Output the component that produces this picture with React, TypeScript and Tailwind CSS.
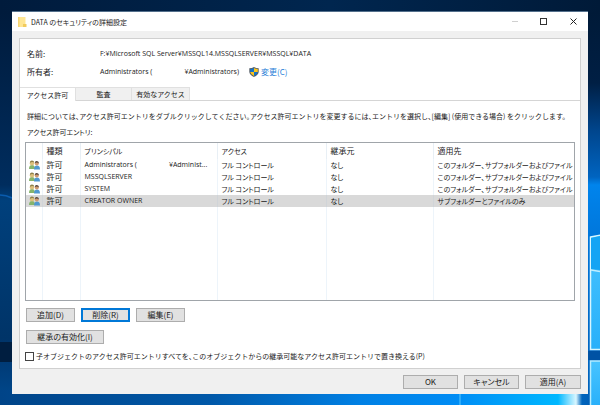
import React, { useState } from "react";

const entries = [
  {
    principal: (
      <>
        Administrators (<span className="inline-block w-8" />
        ¥Administ...
      </>
    ),
    target: "このフォルダー、サブフォルダーおよびファイル",
  },
  { principal: "MSSQLSERVER", target: "このフォルダー、サブフォルダーおよびファイル" },
  { principal: "SYSTEM", target: "このフォルダー、サブフォルダーおよびファイル" },
  { principal: "CREATOR OWNER", target: "サブフォルダーとファイルのみ" },
];

const latin = "font-['Open_Sans','Noto_Sans_CJK_JP',sans-serif] text-[7px]";

const Desktop = () => (
  <svg
    className="absolute inset-0 h-full w-full"
    viewBox="0 0 600 405"
    preserveAspectRatio="none"
    aria-hidden="true"
  >
    <defs>
      <linearGradient id="top" x1="0" x2="1" y1="0" y2="0">
        <stop offset="0" stopColor="#001b3c" />
        <stop offset="0.55" stopColor="#00264f" />
        <stop offset="1" stopColor="#001a38" />
      </linearGradient>
      <linearGradient id="left" x1="0" x2="0" y1="0" y2="1">
        <stop offset="0" stopColor="#001b3c" />
        <stop offset="0.44" stopColor="#002d5e" />
        <stop offset="0.48" stopColor="#00407c" />
        <stop offset="0.83" stopColor="#003468" />
        <stop offset="0.9" stopColor="#003c78" />
        <stop offset="1" stopColor="#004a90" />
      </linearGradient>
      <linearGradient id="right" x1="0" x2="0" y1="0" y2="1">
        <stop offset="0" stopColor="#001a38" />
        <stop offset="0.18" stopColor="#001f44" />
        <stop offset="0.3" stopColor="#00458c" />
        <stop offset="0.42" stopColor="#0064c0" />
        <stop offset="0.44" stopColor="#0084ec" />
        <stop offset="0.6" stopColor="#0074d8" />
        <stop offset="1" stopColor="#0060b8" />
      </linearGradient>
      <linearGradient id="bottom" x1="0" x2="1" y1="0" y2="0">
        <stop offset="0" stopColor="#004488" />
        <stop offset="0.35" stopColor="#0058a8" />
        <stop offset="0.6" stopColor="#0080e4" />
        <stop offset="0.76" stopColor="#008cf4" />
        <stop offset="0.93" stopColor="#00b8ff" />
        <stop offset="0.96" stopColor="#d8f6ff" />
        <stop offset="0.97" stopColor="#0064bc" />
        <stop offset="1" stopColor="#0058b0" />
      </linearGradient>
      <linearGradient id="pane" x1="0" x2="0" y1="0" y2="1">
        <stop offset="0" stopColor="#48c4ff" />
        <stop offset="1" stopColor="#28b0fa" />
      </linearGradient>
    </defs>
    <rect width="600" height="405" fill="url(#top)" />
    <rect y="12" width="20" height="393" fill="url(#left)" />
    <path d="M0 195Q6 195 12 198" fill="none" stroke="#0a5cae" strokeWidth="1.5" />
    <rect y="342" width="12" height="20" fill="#001e40" />
    <rect x="580" y="12" width="20" height="393" fill="url(#right)" />
    <rect y="390" width="600" height="15" fill="url(#bottom)" />
    <path d="M460 390V405" stroke="#58c8ff" strokeWidth="1" />
    <path d="M590.500 237 601 235V349.500H590.500Z" fill="url(#pane)" stroke="#d8f6ff" strokeWidth="1.5" />
    <path d="M591 238 600 236V270L591 269Z" fill="#14a4f4" />
    <path d="M591 270 600 271.500" stroke="#c0eeff" strokeWidth="1.5" />
    <rect x="588" y="351" width="12" height="9" fill="#0052a4" />
    <path d="M590.500 361H601V406H590.500Z" fill="url(#pane)" stroke="#b4ecff" strokeWidth="1.5" />
  </svg>
);

const Folder = () => (
  <svg className="h-3 w-3" viewBox="0 0 12 12" aria-hidden="true">
    <path d="M2 1H9.500V11H2Z" fill="#ffe694" />
    <path d="M2 1H3.500V11H2Z" fill="#f7d675" />
    <path d="M7 8H10.500V11H7Z" fill="#f2cb5c" />
  </svg>
);

const Shield = () => (
  <svg className="h-2.5 w-2.5" viewBox="0 0 10 10" aria-hidden="true">
    <path d="M5 0Q3 1.200.3 1.200V5Q.7 8 5 10Q9.300 8 9.700 5V1.200Q7 1.200 5 0Z" fill="#555d66" />
    <path d="M5 1Q3.300 1.900 1.200 2V5H5Z" fill="#1673c9" />
    <path d="M5 1Q6.700 1.900 8.800 2V5H5Z" fill="#fbc51e" />
    <path d="M1.200 5H5V9Q1.700 7.500 1.200 5Z" fill="#fbc51e" />
    <path d="M8.800 5H5V9Q8.300 7.500 8.800 5Z" fill="#1673c9" />
  </svg>
);

const Users = () => (
  <svg className="h-2.5 w-[11px]" viewBox="0 0 11 10" aria-hidden="true">
    <path d="M0 9Q0 5 3 5T6 9Z" fill="#86b46c" />
    <path d="M5 9.500Q5 5.500 8 5.500T11 9.500Z" fill="#4f98d0" />
    <circle cx="3" cy="3.200" r="2.200" fill="#dcc07c" />
    <path d="M.8 3Q1 .5 3 .6T5.200 2.500Q3 1.500.8 3" fill="#8f8048" />
    <circle cx="7.800" cy="3.500" r="2" fill="#cf9a70" />
    <path d="M5.700 3Q5.800.8 7.900.9T9.900 3.500Q8.500 2 5.700 3" fill="#54453c" />
  </svg>
);

const PushButton = ({
  children,
  className,
}: {
  children: React.ReactNode;
  className: string;
}) => (
  <button
    className={`flex h-[14px] items-center justify-center bg-[#e1e1e1] ${className}`}
  >
    {children}
  </button>
);

const App = () => {
  const [tab, setTab] = useState(0);
  const [selected, setSelected] = useState(3);
  const tabs = ["アクセス許可", "監査", "有効なアクセス"];

  return (
    <div className="relative min-h-screen overflow-hidden bg-[#001b3c] px-3 pt-[11px] pb-[11px] font-['Noto_Sans_CJK_JP',sans-serif] text-[8px] leading-3 text-[#1a1a1a] [font-feature-settings:'palt']">
      <Desktop />
      <div className="relative border-t border-[#54708c] bg-[#f0f0f0]">
        <header className="flex h-[19px] items-center bg-white pl-1">
          <Folder />
          <h1 className="ml-[3px] flex-1 text-[7px]">DATA のセキュリティの詳細設定</h1>
          <button aria-label="最小化" className="flex h-full w-[29px] items-center justify-center">
            <span className="h-px w-1.5 bg-[#d0d0d0]" />
          </button>
          <button aria-label="最大化" className="flex h-full w-[29px] items-center justify-center">
            <span className="size-[7px] border border-[#333]" />
          </button>
          <button aria-label="閉じる" className="flex h-full w-[30px] items-center justify-center">
            <svg className="size-[7px]" viewBox="0 0 7 7" aria-hidden="true">
              <path d="M.5.5 6.500 6.500M6.500.5.5 6.500" stroke="#222" />
            </svg>
          </button>
        </header>

        <main className="mx-[7px] mt-[7px] border border-[#d0d0d0] bg-white pb-[6px]">
          <dl className="grid grid-cols-[73px_1fr] gap-y-1.5 pt-[9px] pl-[7px]">
            <dt>名前:</dt>
            <dd className={latin}>F:¥Microsoft SQL Server¥MSSQL14.MSSQLSERVER¥MSSQL¥DATA</dd>
            <dt>所有者:</dt>
            <dd className="flex items-center">
              <span className={latin}>
                Administrators (<span className="inline-block w-8" />
                ¥Administrators)
              </span>
              <a href="#change" className="ml-2.5 flex items-center gap-0.5 text-[#2a7fd8]">
                <Shield />
                変更(C)
              </a>
            </dd>
          </dl>

          <div role="tablist" className="mt-[9px] flex h-[14px] border-b border-[#d5d5d5] text-[7px] [font-feature-settings:'halt']">
            {tabs.map((name, i) => (
              <button
                key={name}
                role="tab"
                aria-selected={tab === i}
                onClick={() => setTab(i)}
                className={
                  tab === i
                    ? "-mb-px w-14 border-t border-r border-[#e0e0e0] bg-white"
                    : "w-14 border-t border-r border-[#e0e0e0] bg-[#f0f0f0] last:w-[58px]"
                }
              >
                {name}
              </button>
            ))}
          </div>

          <section className="px-[5px] pt-[9px]">
            <p className="pl-0.5 text-[7px] whitespace-nowrap [font-feature-settings:'halt']">
              詳細については、アクセス許可エントリをダブルクリックしてください。アクセス許可エントリを変更するには、エントリを選択し、[編集] (使用できる場合) をクリックします。
            </p>
            <p className="mt-1 pl-0.5 text-[7px]">アクセス許可エントリ:</p>

            <div className="mt-1 flex h-[159px] flex-col border border-[#a0a5aa]">
              <table className="h-full w-full table-fixed text-left">
                <colgroup>
                  <col className="w-4" />
                  <col className="w-[38px]" />
                  <col className="w-[137px]" />
                  <col className="w-[109px]" />
                  <col className="w-[107px]" />
                  <col />
                </colgroup>
                <thead>
                  <tr className="h-4 *:border-r *:border-[#e8eff5] *:p-0 *:pl-1 *:font-normal *:last:border-r-0">
                    <th />
                    <th>種類</th>
                    <th className="text-[7px]">プリンシパル</th>
                    <th className="text-[7px]">アクセス</th>
                    <th>継承元</th>
                    <th>適用先</th>
                  </tr>
                </thead>
                <tbody>
                  {entries.map((entry, i) => (
                    <tr
                      key={i}
                      onClick={() => setSelected(i)}
                      className={`h-3 *:border-r *:p-0 *:pl-1 *:whitespace-nowrap *:last:border-r-0 ${
                        selected === i ? "bg-[#d9d9d9] *:border-[#d0d4d8]" : "*:border-[#edf4fa]"
                      }`}
                    >
                      <td>
                        <div className="-ml-px">
                          <Users />
                        </div>
                      </td>
                      <td>許可</td>
                      <td className={latin}>{entry.principal}</td>
                      <td className="text-[7px]">フル コントロール</td>
                      <td className="text-[7px]">なし</td>
                      <td className="text-[7px]">{entry.target}</td>
                    </tr>
                  ))}
                  <tr className="*:border-r *:border-[#edf4fa] *:last:border-r-0">
                    <td />
                    <td />
                    <td />
                    <td />
                    <td />
                    <td />
                  </tr>
                </tbody>
              </table>
            </div>

            <div className="mt-[7px] flex gap-1.5 pl-px">
              <PushButton className="w-[49px] border border-[#adadad]">追加(D)</PushButton>
              <PushButton className="w-[49px] border-2 border-[#0078d7]">削除(R)</PushButton>
              <PushButton className="w-[49px] border border-[#adadad]">編集(E)</PushButton>
            </div>
            <div className="mt-2 pl-px">
              <PushButton className="w-[78px] border border-[#adadad]">継承の有効化(I)</PushButton>
            </div>
            <label className="mt-1.5 flex items-center gap-0.5 text-[7px] whitespace-nowrap [font-feature-settings:'halt']">
              <input
                type="checkbox"
                className="size-[9px] appearance-none border border-[#444] bg-white checked:bg-[#0078d7]"
              />
              子オブジェクトのアクセス許可エントリすべてを、このオブジェクトからの継承可能なアクセス許可エントリで置き換える(P)
            </label>
          </section>
        </main>

        <footer className="flex justify-end gap-1.5 px-[7px] pt-1.5 pb-[5px]">
          <PushButton className="w-[55px] border border-[#adadad]">OK</PushButton>
          <PushButton className="w-[55px] border border-[#adadad]">キャンセル</PushButton>
          <PushButton className="w-14 border border-[#adadad]">適用(A)</PushButton>
        </footer>
      </div>
    </div>
  );
};

export default App;
